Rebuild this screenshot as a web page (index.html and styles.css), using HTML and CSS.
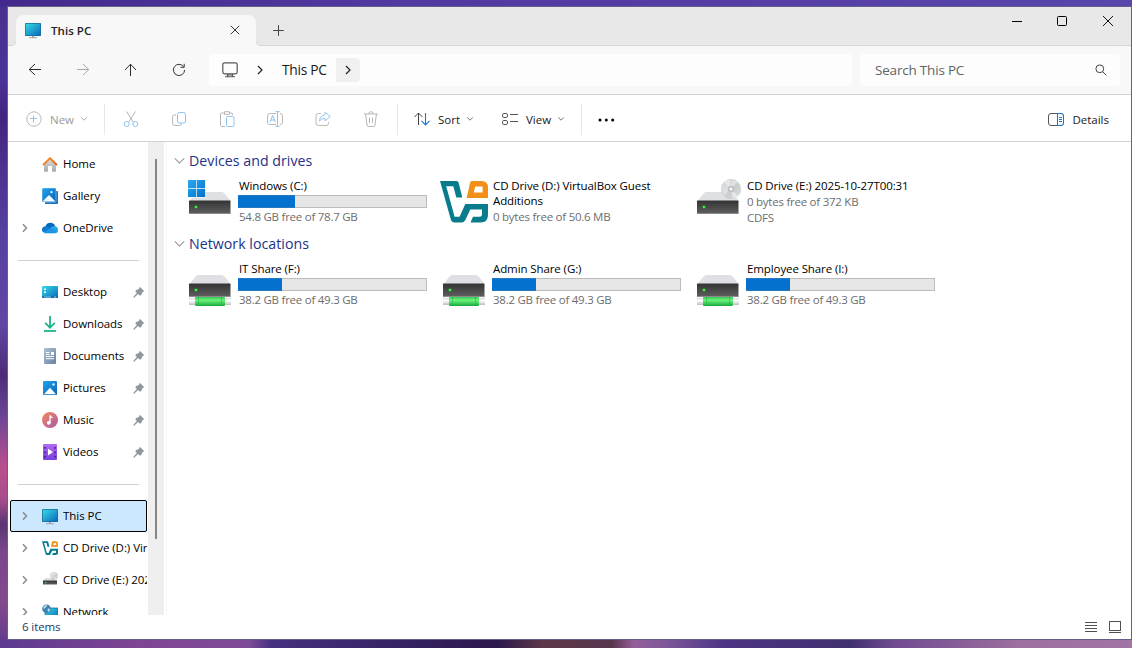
FILE: index.html
```html
<!DOCTYPE html>
<html lang="en">
<head>
<meta charset="utf-8">
<title>This PC</title>
<link rel="stylesheet" href="styles.css">
</head>
<body>
<svg class="defs" width="0" height="0" aria-hidden="true">
  <defs>
    <linearGradient id="gScreen" x1="0" y1="0" x2="1" y2="1"><stop offset="0" stop-color="#37dbe4"/><stop offset="1" stop-color="#0a68bc"/></linearGradient>
    <linearGradient id="gBlue" x1="0" y1="0" x2="1" y2="1"><stop offset="0" stop-color="#20a5ec"/><stop offset="1" stop-color="#0a63b8"/></linearGradient>
    <linearGradient id="gWin" x1="0" y1="0" x2="1" y2="1"><stop offset="0" stop-color="#2aaaf0"/><stop offset="1" stop-color="#0070cc"/></linearGradient>
    <linearGradient id="gFront" x1="0" y1="0" x2="0" y2="1"><stop offset="0" stop-color="#333"/><stop offset="1" stop-color="#606060"/></linearGradient>
    <linearGradient id="gGreen" x1="0" y1="0" x2="0" y2="1"><stop offset="0" stop-color="#35c653"/><stop offset=".35" stop-color="#6cf57c"/><stop offset="1" stop-color="#18a83e"/></linearGradient>
    <linearGradient id="gPipe" x1="0" y1="0" x2="0" y2="1"><stop offset="0" stop-color="#d8d8d8"/><stop offset=".4" stop-color="#fff"/><stop offset="1" stop-color="#bcbcbc"/></linearGradient>
    <linearGradient id="gHome" x1="0" y1="0" x2="0" y2="1"><stop offset="0" stop-color="#dedede"/><stop offset="1" stop-color="#a9a9a9"/></linearGradient>
    <linearGradient id="gRoof" x1="0" y1="0" x2="1" y2="1"><stop offset="0" stop-color="#ff9a2a"/><stop offset="1" stop-color="#d85a12"/></linearGradient>
    <linearGradient id="gDoc" x1="0" y1="0" x2="1" y2="1"><stop offset="0" stop-color="#afc3d5"/><stop offset="1" stop-color="#6580a2"/></linearGradient>
    <linearGradient id="gMusic" x1="0" y1="0" x2="1" y2="1"><stop offset="0" stop-color="#f48a5c"/><stop offset="1" stop-color="#a75aa8"/></linearGradient>
    <linearGradient id="gVideo" x1="0" y1="0" x2="0" y2="1"><stop offset="0" stop-color="#b36bf2"/><stop offset="1" stop-color="#7a3fdc"/></linearGradient>
    <linearGradient id="gDisc" x1="0" y1="0" x2="1" y2="1"><stop offset="0" stop-color="#cfd2d3"/><stop offset=".45" stop-color="#dfe1e2"/><stop offset=".55" stop-color="#c9cccd"/><stop offset="1" stop-color="#dfe1e2"/></linearGradient>
    <linearGradient id="gDown" x1="0" y1="0" x2="0" y2="1"><stop offset="0" stop-color="#2fd09a"/><stop offset="1" stop-color="#0b9c82"/></linearGradient>
    <symbol id="pc" viewBox="0 0 16 16">
      <rect x="7" y="13" width="2" height="2" fill="#9da7ae"/><rect x="4" y="14.2" width="8" height="1" fill="#9da7ae"/>
      <rect x="0" y="0" width="16" height="13" rx=".8" fill="#17679b"/><rect x=".7" y=".7" width="14.6" height="11.6" fill="url(#gScreen)"/>
    </symbol>
    <symbol id="exp" viewBox="0 0 6 10"><path d="M1 1.200 4.500 5 1 8.800" fill="none" stroke="#8a8a8a" stroke-width="1.5"/></symbol>
    <symbol id="drop" viewBox="0 0 8 6"><path d="M1.2 1.4 4 4.2 6.8 1.4" fill="none" stroke="currentColor" stroke-width="1"/></symbol>
    <symbol id="groupdrop" viewBox="0 0 12 8"><path d="M.8 1 6 6.3 11.2 1" fill="none" stroke="#8c8c8c" stroke-width="1.1"/></symbol>
    <symbol id="pin" viewBox="0 0 12 12"><path d="M6.700.7 11.300 5.200 9.700 6.100 8.100 8.900 7.100 9.800 5 7.900 1.400 11.400.4 11.600.6 10.600 3.900 7 2.200 5.200 3.300 4 5.900 3.100Z" fill="#8d979e"/></symbol>
    <symbol id="vbox" viewBox="0 0 48 48">
      <path d="M0 2h16.500q1.700 0 2.100 1.600L22.300 18.500H16.300L13.300 7.200H6.200L14.600 37.800H19.600L25.300 25H48V36q0 7.500-7.500 7.500H30.500L33 37.800H39.500q2.500 0 2.500-2.500V30.500H30.300L25.300 41q-1.200 2.500-4 2.500H14.500q-2.800 0-3.700-3Z" fill="#087c8c"/>
      <path fill-rule="evenodd" d="M31.800 2H41.500Q48 2 48 8.500V19H26.700L30 4Q30.500 2 31.800 2ZM35.200 7.500 33.800 13.400H42.600V7.500Z" fill="#f28f16"/>
    </symbol>
    <symbol id="body" viewBox="0 0 48 48">
      <path d="M12.500 13h23Q37 13 38 14L45 22H3.500L10 14Q11 13 12.500 13Z" fill="#dfe0e4"/>
      <rect x="3" y="21.500" width="41.500" height="13.500" rx=".8" fill="url(#gFront)"/><rect x="3" y="34" width="41.500" height="1" fill="#8b8b8b"/>
      <circle cx="10" cy="28" r="1.800" fill="#1f9f28"/><circle cx="10" cy="28" r="1.100" fill="#4dfb4d"/>
    </symbol>
    <symbol id="netdrive" viewBox="0 0 48 48">
      <use href="#body" width="48" height="48"/><rect x="3" y="35.800" width="42" height="7.200" fill="url(#gPipe)"/>
      <rect x="9" y="35" width="30" height="9" rx="1" fill="url(#gGreen)"/><path d="M12.500 35v9M35.500 35v9" stroke="#19a83b" stroke-opacity=".45"/>
    </symbol>
    <symbol id="disc" viewBox="0 0 20 20">
      <circle cx="10" cy="10" r="9.700" fill="url(#gDisc)" stroke="#c6c9ca" stroke-width=".6"/><path d="M10 10 3 3A10 10 0 0 1 8 .6ZM10 10l7 7a10 10 0 0 1-5 2.500Z" fill="#e6e7e7"/>
      <circle cx="10" cy="10" r="3.300" fill="#bcc1c3"/><circle cx="10" cy="10" r="1.600" fill="#f8f8f8"/>
    </symbol>
  </defs>
</svg>

<main class="window">
  <header class="titlebar">
    <div class="tab">
      <svg class="ic16" viewBox="0 0 16 16"><use href="#pc"/></svg>
      <span class="tab-title">This PC</span>
      <svg class="tab-close" viewBox="0 0 10 10"><path d="m.8.8 8.400 8.400M9.200.8.800 9.200" fill="none" stroke="#333"/></svg>
    </div>
    <svg class="newtab" viewBox="0 0 11 11"><path d="M5.500.2v10.600M.2 5.500h10.600" stroke="#444"/></svg>
    <div class="controls">
      <svg width="12" height="12"><path d="M1 6.500h10" stroke="#000"/></svg>
      <svg width="12" height="12"><rect x="1.500" y="1.500" width="9" height="9" rx="1" fill="none" stroke="#000"/></svg>
      <svg width="12" height="12"><path d="m1 1 10 10M11 1 1 11" stroke="#111"/></svg>
    </div>
  </header>

  <nav class="navbar">
    <div class="navbtns">
      <svg width="14" height="14" fill="none" stroke="#2b2b2b"><path d="M7 1 1.200 6.500 7 12M1.200 6.500H13"/></svg>
      <svg width="14" height="14" fill="none" stroke="#a9a9a9"><path d="M7 1 12.800 6.500 7 12M12.800 6.500H1"/></svg>
      <svg width="14" height="14" fill="none" stroke="#2b2b2b"><path d="M1 7 6.500 1.200 12 7M6.500 1.200V13"/></svg>
      <svg width="14" height="14" fill="none" stroke="#333"><path d="M11.500 3.600A5.600 5.600 0 1 0 12.600 7M12.200.8V4.300H8.600"/></svg>
    </div>
    <div class="address">
      <svg class="addr-pc" viewBox="0 0 16 16"><rect x=".8" y=".8" width="14.400" height="11" rx="1.800" fill="none" stroke="#555" stroke-width="1.200"/><path d="M5.500 12v2.500M10.500 12v2.500M3 14.700h10M6 13h4" stroke="#555" stroke-width="1.100"/></svg>
      <svg class="crumb1" viewBox="0 0 6 10"><path d="M1 1 5 5 1 9" fill="none" stroke="#222" stroke-width="1.200"/></svg>
      <span class="crumb-text">This PC</span>
      <span class="crumb-more"><svg class="crumb2" viewBox="0 0 6 10"><path d="M1 1 5 5 1 9" fill="none" stroke="#222" stroke-width="1.200"/></svg></span>
    </div>
    <div class="search"><span>Search This PC</span>
      <svg width="12" height="12" viewBox="0 0 12 12" fill="none" stroke="#444"><circle cx="4.800" cy="4.800" r="3.900"/><path d="m7.700 7.700 3.700 3.700"/></svg>
    </div>
  </nav>

  <section class="toolbar">
    <div class="cmd new">
      <svg width="16" height="16" fill="none"><circle cx="8" cy="8" r="7.200" stroke="#b9b9b9"/><path d="M7.500 4.500v7M4 7.500h7" stroke="#8fc3e8"/></svg>
      <span>New</span><svg class="drop" viewBox="0 0 8 6"><use href="#drop"/></svg>
    </div>
    <div class="tools">
      <svg viewBox="0 0 16 16"><path d="M3.500.5 10.200 11M12.500.5 5.800 11" stroke="#b5b5b5"/><g stroke="#8fc3ee"><circle cx="3.700" cy="13" r="2.500"/><circle cx="12.300" cy="13" r="2.500"/></g></svg>
      <svg viewBox="0 0 16 16"><path d="M5 4H3.200Q1.500 4 1.500 5.800v6.400Q1.500 14.500 4 14.500h4.500q2 0 2-2" stroke="#b9b9b9"/><rect x="6.500" y="1.500" width="8" height="10.500" rx="2" stroke="#8fc3ee"/></svg>
      <svg viewBox="0 0 16 16"><path d="M5 2H2.500q-1 0-1 1v11.500q0 1 1 1H6M11 2h1.500q1 0 1 1v1M5.500.7h5v2.600h-5Z" stroke="#b5b5b5"/><rect x="7.500" y="5.500" width="7.500" height="10" rx="1.200" stroke="#8fc3ee"/></svg>
      <svg viewBox="0 0 16 16"><path d="M9 2.500H2.800Q.5 2.500.5 5v6q0 2.500 2.300 2.500H9M13 2.500q2.500 0 2.500 2.500v6q0 2.500-2.500 2.500" stroke="#b9b9b9"/><path d="m3 11 2.700-6.500L8.400 11M4 9h3.500M10.500.7v14.600M8.300.7h4.400M8.300 15.300h4.400" stroke="#8fc3ee"/></svg>
      <svg viewBox="0 0 16 16"><path d="M6 2.500H3.500Q1 2.500 1 5v7q0 2.500 2.500 2.500H11q2.500 0 2.500-2.500v-1" stroke="#b9b9b9"/><path d="M10 1.300 15.300 5.500 10 9.800V7.400Q6.300 7.300 4.500 10 5 4.300 10 3.800Z" stroke="#8fc3ee" stroke-linejoin="round"/></svg>
      <svg viewBox="0 0 16 16"><path d="M1 3h14M5.700 3Q5.700.7 8 .7T10.300 3M2.600 3.300 4 14q.2 1.500 1.700 1.500h4.600q1.500 0 1.700-1.500l1.400-10.700M6.500 6.500v5.500M9.500 6.500v5.500" stroke="#b5b5b5"/></svg>
    </div>
    <div class="cmd sort">
      <svg width="16" height="14" fill="none"><path d="M.5 5 4.500 1 8.500 5M4.500 1v12" stroke="#444"/><path d="M7.500 8.800 11.500 13l4-4.200M11.500 1v12" stroke="#1879d0" stroke-width="1.100"/></svg>
      <span>Sort</span><svg class="drop" viewBox="0 0 8 6"><use href="#drop"/></svg>
    </div>
    <div class="cmd view">
      <svg width="16" height="14" fill="none" stroke="#555"><rect x=".5" y="1.500" width="5" height="4" rx="1.400"/><rect x=".5" y="8.500" width="5" height="4" rx="1.400"/><path d="M8 2.500h8M8 9.500h8"/></svg>
      <span>View</span><svg class="drop" viewBox="0 0 8 6"><use href="#drop"/></svg>
    </div>
    <div class="more"><svg width="17" height="4"><circle cx="2" cy="2" r="1.500"/><circle cx="8.300" cy="2" r="1.500"/><circle cx="14.700" cy="2" r="1.500"/></svg></div>
    <div class="cmd details">
      <svg width="16" height="13" fill="none"><path d="M9.500.5H3Q.5.500.5 3v7q0 2.500 2.500 2.500h6.500" stroke="#555"/><path d="M9.500.5H13q2.500 0 2.500 2.500v7q0 2.500-2.500 2.500H9.500ZM11 4.500h3M11 6.500h3M11 8.500h3" stroke="#1479d0" stroke-width="1.100"/></svg>
      <span>Details</span>
    </div>
  </section>

  <div class="content">
    <aside class="sidebar">
      <div class="item"><i></i><svg class="ic" viewBox="0 0 16 16"><path d="M2 7.500 8 2l6 5.500V15q0 .8-.8.800H10V10H6v5.800H2.800Q2 15.800 2 15Z" fill="url(#gHome)"/><path d="M.3 8.500 7.300 1.400q.7-.7 1.400 0l7 7.100-1.400 1.300L8 3.500 1.600 9.800Z" fill="url(#gRoof)"/></svg><span>Home</span></div>
      <div class="item"><i></i><svg class="ic" viewBox="0 0 16 16"><path d="M3 3h12.200q.8 0 .8.800V15q0 1-1 1H3Z" fill="#1475c4"/><rect width="14" height="14" rx="1" fill="url(#gBlue)" stroke="#fff" stroke-width=".4"/><path d="m1 13 5.400-5.400q.6-.6 1.200 0L13 13q-.3.600-1 .600H2q-.7 0-1-.600Z" fill="#f2f9ff"/><circle cx="9.500" cy="4.200" r="1.100" fill="#fff"/></svg><span>Gallery</span></div>
      <div class="item"><svg class="exp"><use href="#exp"/></svg><svg class="ic" viewBox="0 0 16 16"><path d="M0 10Q0 6.600 3.400 6.200 5 2.700 8.500 2.800q3.500.2 4.800 3.500L7 12H3Q0 12.500 0 10Z" fill="#0868bd"/><path d="M2 12.700 9.500 7q1.500-1 3.800-.7 2.700.6 2.700 3.500 0 3.500-3.500 3.500H3.700Q2.700 13.300 2 12.700Z" fill="#28a8ea"/><path d="M3.400 6.200q2-.2 3.700 1L16 11q-.8 2.300-3.500 2.300H3.700Q.8 13.300.2 11Z" fill="#158be0" opacity=".6"/></svg><span>OneDrive</span></div>
      <div class="rule"></div>
      <div class="item"><i></i><svg class="ic" viewBox="0 0 16 16"><rect y="2" width="16" height="12" rx="1" fill="url(#gScreen)"/><path d="M2 4.500h2v1.600H2ZM2 7.500h2v1.600H2Z" fill="#fff"/><path d="M0 12h16v1q0 1-1 1H1q-1 0-1-1Z" fill="#1371ae"/><path d="M2 13h7M12 13h2" stroke="#8ed6ef"/></svg><span>Desktop</span><svg class="pin"><use href="#pin"/></svg></div>
      <div class="item"><i></i><svg class="ic" viewBox="0 0 16 16"><path d="M8 0v12M3.200 6.800 8 11.700l4.800-4.900" fill="none" stroke="#1cb58d" stroke-width="1.800"/><rect x="2" y="14" width="12" height="1.800" fill="url(#gDown)"/></svg><span>Downloads</span><svg class="pin"><use href="#pin"/></svg></div>
      <div class="item"><i></i><svg class="ic" viewBox="0 0 16 16"><rect x="2" y="0" width="12" height="16" rx="1" fill="url(#gDoc)"/><path d="M4 4.500h3.500M4 6.500h3.500M4 8.500h8M4 10.700h8" stroke="#fff"/><rect x="9" y="4" width="3" height="3" fill="#fff"/></svg><span>Documents</span><svg class="pin"><use href="#pin"/></svg></div>
      <div class="item"><i></i><svg class="ic" viewBox="0 0 16 16"><rect x="1" y="1" width="14" height="14" rx=".8" fill="url(#gBlue)"/><path d="m2 14.200 6-6.400 6 6.400Z" fill="#fff"/><circle cx="11.500" cy="4.500" r="1.200" fill="#d9f2ff"/></svg><span>Pictures</span><svg class="pin"><use href="#pin"/></svg></div>
      <div class="item"><i></i><svg class="ic" viewBox="0 0 16 16"><circle cx="8" cy="8" r="8" fill="url(#gMusic)"/><circle cx="6.800" cy="10.800" r="1.900" fill="#fff"/><path d="M8 11V3.500q.5 1.800 2.600 2.200" fill="none" stroke="#fff" stroke-width="1.300"/></svg><span>Music</span><svg class="pin"><use href="#pin"/></svg></div>
      <div class="item"><i></i><svg class="ic" viewBox="0 0 16 16"><rect x="1" y="0" width="14" height="16" rx="1" fill="url(#gVideo)"/><path d="M3 3v11M13 3v11" stroke="#43208a" stroke-width="1.600" stroke-dasharray="1.800 2.600"/><path d="m6 4.800 5 3.300-5 3.300Z" fill="#fff"/></svg><span>Videos</span><svg class="pin"><use href="#pin"/></svg></div>
      <div class="rule"></div>
      <div class="item selected"><svg class="exp"><use href="#exp"/></svg><svg class="ic pcicon" viewBox="0 0 16 16"><use href="#pc"/></svg><span>This PC</span></div>
      <div class="item"><svg class="exp"><use href="#exp"/></svg><svg class="ic" viewBox="0 -1.500 48 48"><use href="#vbox" width="48" height="48"/></svg><span>CD Drive (D:) VirtualBox Guest Additions</span></div>
      <div class="item"><svg class="exp"><use href="#exp"/></svg><svg class="ic" viewBox="0 0 16 16"><path d="M3.500 6h9L15 9H1Z" fill="#dcdde0"/><use href="#disc" x="8" y="0" width="8" height="8"/><rect x="1" y="8.500" width="14" height="4" fill="url(#gFront)"/><circle cx="3.800" cy="10.500" r=".8" fill="#35e34a"/></svg><span>CD Drive (E:) 2025-10-27T00:31</span></div>
      <div class="item"><svg class="exp"><use href="#exp"/></svg><svg class="ic" viewBox="0 0 16 16"><rect x="3" y="4" width="13" height="10" fill="url(#gScreen)" stroke="#17679b" stroke-width=".7"/><circle cx="4.500" cy="4.800" r="4.300" fill="#3d83ae"/><path d="M1.500 3q2-2.500 3.500-1.700.5 1.500-1.500 2.200-.5 1.500-2 1ZM5.500 5q2-1 2.500.5-.5 2-2 2.500Z" fill="#b7e3f1"/></svg><span>Network</span></div>
    </aside>
    <div class="scroll"><div class="thumb"></div></div>
    <section class="files">
      <h2><svg><use href="#groupdrop"/></svg>Devices and drives</h2>
      <div class="tiles">
        <div class="tile"><svg class="big" viewBox="0 0 48 48"><use href="#body"/><path d="M2 1h17.500v17.500H2Z" fill="#fff"/><path d="M2 1h8.200v8.200H2ZM10.900 1h8.200v8.200h-8.200ZM2 9.900h8.200v8.200H2ZM10.900 9.900h8.200v8.200h-8.200Z" fill="url(#gWin)"/></svg>
          <div class="info"><b>Windows (C:)</b><div class="bar"><div style="width:30.500%"></div></div><p>54.8 GB free of 78.7 GB</p></div></div>
        <div class="tile"><svg class="big" viewBox="0 0 48 48"><use href="#vbox"/></svg>
          <div class="info"><b>CD Drive (D:) VirtualBox Guest Additions</b><p>0 bytes free of 50.6 MB</p></div></div>
        <div class="tile"><svg class="big" viewBox="0 0 48 48"><use href="#body"/><use href="#disc" x="27" y="0" width="20" height="20"/></svg>
          <div class="info"><b>CD Drive (E:) 2025-10-27T00:31</b><p>0 bytes free of 372 KB</p><p>CDFS</p></div></div>
      </div>
      <h2><svg><use href="#groupdrop"/></svg>Network locations</h2>
      <div class="tiles">
        <div class="tile"><svg class="big" viewBox="0 0 48 48"><use href="#netdrive"/></svg>
          <div class="info"><b>IT Share (F:)</b><div class="bar"><div style="width:23.500%"></div></div><p>38.2 GB free of 49.3 GB</p></div></div>
        <div class="tile"><svg class="big" viewBox="0 0 48 48"><use href="#netdrive"/></svg>
          <div class="info"><b>Admin Share (G:)</b><div class="bar"><div style="width:23.500%"></div></div><p>38.2 GB free of 49.3 GB</p></div></div>
        <div class="tile"><svg class="big" viewBox="0 0 48 48"><use href="#netdrive"/></svg>
          <div class="info"><b>Employee Share (I:)</b><div class="bar"><div style="width:23.500%"></div></div><p>38.2 GB free of 49.3 GB</p></div></div>
      </div>
    </section>
  </div>

  <footer class="status"><span>6 items</span>
    <svg width="12" height="12"><path d="M0 1.500h12M0 4.500h12M0 7.500h12M0 10.500h12" stroke="#505050"/></svg>
    <svg width="12" height="12" fill="none" stroke="#505050"><rect x=".5" y=".5" width="11" height="9"/><path d="M0 11.500h12"/></svg>
  </footer>
</main>
</body>
</html>
```
FILE: styles.css
```css
* { box-sizing: border-box; }
html, body { height: 100%; }
body {
  margin: 0;
  padding: 7px 1px 9px 8px;
  overflow: hidden;
  font-family: "Open Sans", "Noto Sans", sans-serif;
  font-size: 11.5px;
  color: #1a1a1a;
  background:
    linear-gradient(90deg, #43298b, #5039a0 35%, #5a45aa) 0 0 / 100% 7px no-repeat,
    linear-gradient(90deg, #5b3a90 0, #7f4494 12%, #7e4b98 22%, #453080 24%, #33205f 37%, #2c184c 44%, #5c3848 48%, #57354c 54%, #94609a 56%, #7d5598 59%, #4c3484 64%, #40306f 75%, #704b90 79%, #9c6f9f 90%, #a274a5) 0 100% / 100% 9px no-repeat,
    linear-gradient(180deg, #5d49ad, #7b65a5 30%, #30285c 50%, #805c95 70%, #a18090) 100% 0 / 1px 100% no-repeat,
    linear-gradient(180deg, #48308f 0, #4b3297 12%, #432580 18%, #5740a0 36%, #6147a4 50%, #4c2c78 58%, #6a4494 64%, #b95090 72%, #a94d8b 77%, #5a3574 81%, #7a468b 85%, #84498d 93%, #5c3a8f 100%);
}
.defs { display: block; }
svg { display: block; flex: none; }
span { white-space: nowrap; }

.window { height: 632px; display: flex; flex-direction: column; background: #fff; box-shadow: 0 0 0 1px #665e8b; }

.titlebar { height: 39px; flex: none; display: flex; align-items: flex-start; background: #e8e8e8; border-bottom: 1px solid #d6d6d6; padding-left: 8px; }
.tab { width: 240px; height: 31px; margin-top: 8px; display: flex; align-items: center; background: #f8f8f8; border-radius: 8px 8px 0 0; padding: 0 16px 0 9px; position: relative; }
.tab::before, .tab::after { content: ""; position: absolute; bottom: 0; width: 4px; height: 4px; }
.tab::before { left: -4px; background: radial-gradient(circle at 0 0, #e8e8e8 3px, #d6d6d6 3.500px, #f8f8f8 4.200px); }
.tab::after { right: -4px; background: radial-gradient(circle at 100% 0, #e8e8e8 3px, #d6d6d6 3.500px, #f8f8f8 4.200px); }
.ic16 { width: 16px; height: 16px; }
.tab-title { margin-left: 10px; flex: 1; font-weight: 600; color: #222; letter-spacing: .05px; }
.tab-close { width: 10px; height: 10px; margin-bottom: 2px; }
.newtab { width: 11px; height: 11px; margin: 18px 0 0 17px; }
.controls { margin: 8px 17px 0 auto; display: flex; }
.controls svg:nth-child(2) { margin: 0 34px 0 33px; }

.navbar { height: 49px; flex: none; display: flex; align-items: center; background: #f8f8f8; border-bottom: 1px solid #d2d2d2; padding: 0 11px 0 20px; }
.navbtns { display: flex; gap: 34px; width: 181px; }
.address { flex: 1; height: 32px; display: flex; align-items: center; background: #fdfdfd; border-radius: 4px; padding-left: 13px; }
.addr-pc { width: 16px; height: 16px; }
.crumb1, .crumb2 { width: 6px; height: 10px; }
.crumb1 { margin-left: 19px; }
.crumb-text { margin-left: 19px; width: 54px; font-size: 13.800px; letter-spacing: -.3px; padding-bottom: 1px; }
.crumb-more { width: 24px; height: 24px; display: grid; place-items: center; background: #f0f0f0; border-radius: 0 4px 4px 0; }
.search { width: 260px; height: 32px; margin-left: 8px; display: flex; align-items: center; justify-content: space-between; padding: 0 13px 0 15px; border-radius: 4px; background: #fdfdfd; color: #636363; font-size: 13.500px; letter-spacing: -.2px; }

.toolbar { height: 47px; flex: none; display: flex; align-items: center; border-bottom: 1px solid #d2d2d2; padding: 2px 22px 0 18px; }
.cmd { display: flex; align-items: center; }
.cmd span { margin-left: 8px; }
.drop { width: 8px; height: 6px; margin-left: 6px; color: #777; }
.new { width: 79px; height: 31px; color: #9a9a9a; border-right: 1px solid #e8e8e8; }
.new .drop { color: #aaa; }
.new span { width: 24px; }
.tools { width: 293px; height: 31px; display: flex; align-items: center; gap: 32px; padding-left: 18px; border-right: 1px solid #e8e8e8; }
.tools svg { width: 16px; height: 16px; fill: none; }
.sort { width: 88px; padding-left: 16px; }
.sort span { width: 22px; }
.view { width: 96px; height: 31px; padding-left: 16px; border-right: 1px solid #e8e8e8; }
.view span { width: 26px; }
.view .drop { margin-left: 5px; }
.more { padding: 2px 0 0 16px; }
.details { margin-left: auto; }

.content { flex: 1; min-height: 0; display: flex; }
.sidebar { width: 140px; overflow: hidden; padding: 6px 1px 0 2px; font-size: 11.500px; color: #000; letter-spacing: -.05px; }
.item { height: 32px; display: flex; align-items: center; padding-left: 12px; overflow: hidden; border: 0 solid #000; }
.item i, .exp { width: 6px; height: 10px; flex: none; }
.ic { width: 16px; height: 16px; margin-left: 14px; }
.item span { margin-left: 5px; padding-bottom: 2px; }
.pin { width: 12px; height: 12px; margin-left: auto; margin-right: 2px; }
.rule { height: 32px; margin: 0 8px 0 8px; background: linear-gradient(#d0d0d0, #d0d0d0) 0 16px / 100% 1px no-repeat; }
.selected { border-width: 1px; background: #cce8ff; padding-left: 11px; border-radius: 2px; }
.pcicon { margin-top: 1px; }
.scroll { width: 16px; background: #efefef; padding: 17px 0 0 7px; }
.thumb { width: 2px; height: 380px; background: #868686; }
.files { flex: 1; margin-left: 2px; border-left: 1px solid #f5f5f5; padding: 8px 0 0 7px; }
h2 { height: 21px; margin: 0 0 8px; display: flex; align-items: center; font-size: 14.200px; font-weight: 400; letter-spacing: .02px; color: #1e3287; }
h2 svg { width: 11px; height: 8px; margin-right: 4px; }
.tiles { height: 54px; display: flex; padding-left: 12px; }
.tile { width: 254px; display: flex; }
.big { width: 48px; height: 48px; }
.info { margin-left: 5px; width: 188px; }
b { display: block; font-weight: 400; line-height: 15px; margin: -1px 0 1px; color: #000; font-size: 11.500px; letter-spacing: -.1px; width: 175px; }
p { margin: 0; line-height: 16px; color: #6d6d6d; font-size: 11.500px; letter-spacing: -.25px; }
.bar { margin: 2px 0 1px -1px; width: 189px; height: 13px; background: #e6e6e6; border: 1px solid #bcbcbc; }
.bar div { height: 13px; margin: -1px 0 0 -1px; background: #0571cf; border-block: 1px solid #2479c2; }

.status { height: 24px; flex: none; display: flex; align-items: center; padding: 0 10px 0 14px; }
.status span { margin-right: auto; padding-bottom: 2px; color: #24395f; letter-spacing: -.1px; }
.status svg { margin-left: 12px; }
```
